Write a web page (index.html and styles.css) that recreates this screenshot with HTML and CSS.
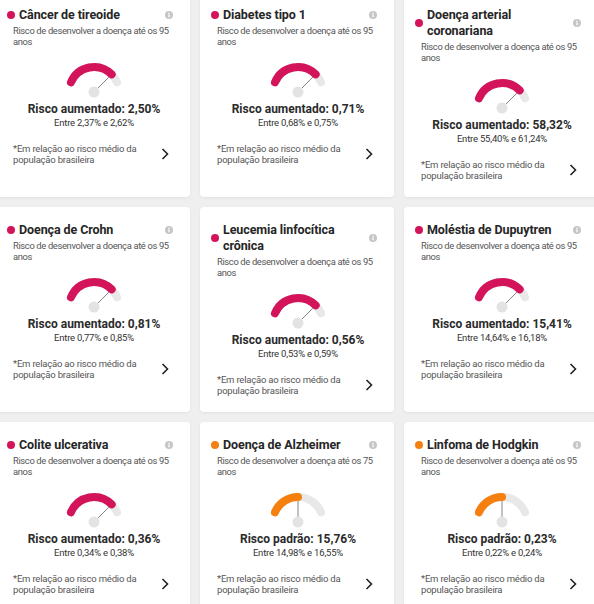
FILE: index.html
```html
<!DOCTYPE html>
<html>
<head>
    <meta charset="utf-8">
    <title>Riscos genéticos</title>

    <!-- START CSS STYLE -->
    <link rel="stylesheet" href="styles.css">
    <!-- End CSS STYLE -->

</head>

<body>
    <div class="risk-grid">

        <!-- Linha 1 -->
        <div class="risk-card">
            <div class="risk-head">
                <span class="dot dot-high"></span>
                <h2 class="risk-title">Câncer de tireoide</h2>
                <svg class="info" viewBox="0 0 10 10"><circle cx="5" cy="5" r="5"/><rect x="4.2" y="4.2" width="1.6" height="3.6"/><circle cx="5" cy="2.7" r="0.9"/></svg>
            </div>
            <p class="risk-sub">Risco de desenvolver a doença até os 95 anos</p>
            <svg class="gauge gauge-high" viewBox="0 0 62 38">
                <path class="track" d="M7.99 21.23A25 25 0 0 1 54.01 21.23"/>
                <path class="fill" d="M7.99 21.23A25 25 0 0 1 48.68 13.32"/>
                <line class="needle" x1="31" y1="31" x2="45.85" y2="16.15"/>
                <circle class="pivot" cx="31" cy="31" r="5.5"/>
            </svg>
            <p class="risk-value">Risco aumentado: 2,50%</p>
            <p class="risk-range">Entre 2,37% e 2,62%</p>
            <div class="risk-foot">
                <p class="risk-note">*Em relação ao risco médio da população brasileira</p>
                <svg class="chevron" viewBox="0 0 8 12"><path d="M1.5 1l5 5-5 5"/></svg>
            </div>
        </div>

        <div class="risk-card">
            <div class="risk-head">
                <span class="dot dot-high"></span>
                <h2 class="risk-title">Diabetes tipo 1</h2>
                <svg class="info" viewBox="0 0 10 10"><circle cx="5" cy="5" r="5"/><rect x="4.2" y="4.2" width="1.6" height="3.6"/><circle cx="5" cy="2.7" r="0.9"/></svg>
            </div>
            <p class="risk-sub">Risco de desenvolver a doença até os 95 anos</p>
            <svg class="gauge gauge-high" viewBox="0 0 62 38">
                <path class="track" d="M7.99 21.23A25 25 0 0 1 54.01 21.23"/>
                <path class="fill" d="M7.99 21.23A25 25 0 0 1 48.68 13.32"/>
                <line class="needle" x1="31" y1="31" x2="45.85" y2="16.15"/>
                <circle class="pivot" cx="31" cy="31" r="5.5"/>
            </svg>
            <p class="risk-value">Risco aumentado: 0,71%</p>
            <p class="risk-range">Entre 0,68% e 0,75%</p>
            <div class="risk-foot">
                <p class="risk-note">*Em relação ao risco médio da população brasileira</p>
                <svg class="chevron" viewBox="0 0 8 12"><path d="M1.5 1l5 5-5 5"/></svg>
            </div>
        </div>

        <div class="risk-card">
            <div class="risk-head">
                <span class="dot dot-high"></span>
                <h2 class="risk-title">Doença arterial coronariana</h2>
                <svg class="info" viewBox="0 0 10 10"><circle cx="5" cy="5" r="5"/><rect x="4.2" y="4.2" width="1.6" height="3.6"/><circle cx="5" cy="2.7" r="0.9"/></svg>
            </div>
            <p class="risk-sub">Risco de desenvolver a doença até os 95 anos</p>
            <svg class="gauge gauge-high" viewBox="0 0 62 38">
                <path class="track" d="M7.99 21.23A25 25 0 0 1 54.01 21.23"/>
                <path class="fill" d="M7.99 21.23A25 25 0 0 1 48.68 13.32"/>
                <line class="needle" x1="31" y1="31" x2="45.85" y2="16.15"/>
                <circle class="pivot" cx="31" cy="31" r="5.5"/>
            </svg>
            <p class="risk-value">Risco aumentado: 58,32%</p>
            <p class="risk-range">Entre 55,40% e 61,24%</p>
            <div class="risk-foot">
                <p class="risk-note">*Em relação ao risco médio da população brasileira</p>
                <svg class="chevron" viewBox="0 0 8 12"><path d="M1.5 1l5 5-5 5"/></svg>
            </div>
        </div>

        <!-- Linha 2 -->
        <div class="risk-card">
            <div class="risk-head">
                <span class="dot dot-high"></span>
                <h2 class="risk-title">Doença de Crohn</h2>
                <svg class="info" viewBox="0 0 10 10"><circle cx="5" cy="5" r="5"/><rect x="4.2" y="4.2" width="1.6" height="3.6"/><circle cx="5" cy="2.7" r="0.9"/></svg>
            </div>
            <p class="risk-sub">Risco de desenvolver a doença até os 95 anos</p>
            <svg class="gauge gauge-high" viewBox="0 0 62 38">
                <path class="track" d="M7.99 21.23A25 25 0 0 1 54.01 21.23"/>
                <path class="fill" d="M7.99 21.23A25 25 0 0 1 48.68 13.32"/>
                <line class="needle" x1="31" y1="31" x2="45.85" y2="16.15"/>
                <circle class="pivot" cx="31" cy="31" r="5.5"/>
            </svg>
            <p class="risk-value">Risco aumentado: 0,81%</p>
            <p class="risk-range">Entre 0,77% e 0,85%</p>
            <div class="risk-foot">
                <p class="risk-note">*Em relação ao risco médio da população brasileira</p>
                <svg class="chevron" viewBox="0 0 8 12"><path d="M1.5 1l5 5-5 5"/></svg>
            </div>
        </div>

        <div class="risk-card">
            <div class="risk-head">
                <span class="dot dot-high"></span>
                <h2 class="risk-title">Leucemia linfocítica crônica</h2>
                <svg class="info" viewBox="0 0 10 10"><circle cx="5" cy="5" r="5"/><rect x="4.2" y="4.2" width="1.6" height="3.6"/><circle cx="5" cy="2.7" r="0.9"/></svg>
            </div>
            <p class="risk-sub">Risco de desenvolver a doença até os 95 anos</p>
            <svg class="gauge gauge-high" viewBox="0 0 62 38">
                <path class="track" d="M7.99 21.23A25 25 0 0 1 54.01 21.23"/>
                <path class="fill" d="M7.99 21.23A25 25 0 0 1 48.68 13.32"/>
                <line class="needle" x1="31" y1="31" x2="45.85" y2="16.15"/>
                <circle class="pivot" cx="31" cy="31" r="5.5"/>
            </svg>
            <p class="risk-value">Risco aumentado: 0,56%</p>
            <p class="risk-range">Entre 0,53% e 0,59%</p>
            <div class="risk-foot">
                <p class="risk-note">*Em relação ao risco médio da população brasileira</p>
                <svg class="chevron" viewBox="0 0 8 12"><path d="M1.5 1l5 5-5 5"/></svg>
            </div>
        </div>

        <div class="risk-card">
            <div class="risk-head">
                <span class="dot dot-high"></span>
                <h2 class="risk-title">Moléstia de Dupuytren</h2>
                <svg class="info" viewBox="0 0 10 10"><circle cx="5" cy="5" r="5"/><rect x="4.2" y="4.2" width="1.6" height="3.6"/><circle cx="5" cy="2.7" r="0.9"/></svg>
            </div>
            <p class="risk-sub">Risco de desenvolver a doença até os 95 anos</p>
            <svg class="gauge gauge-high" viewBox="0 0 62 38">
                <path class="track" d="M7.99 21.23A25 25 0 0 1 54.01 21.23"/>
                <path class="fill" d="M7.99 21.23A25 25 0 0 1 48.68 13.32"/>
                <line class="needle" x1="31" y1="31" x2="45.85" y2="16.15"/>
                <circle class="pivot" cx="31" cy="31" r="5.5"/>
            </svg>
            <p class="risk-value">Risco aumentado: 15,41%</p>
            <p class="risk-range">Entre 14,64% e 16,18%</p>
            <div class="risk-foot">
                <p class="risk-note">*Em relação ao risco médio da população brasileira</p>
                <svg class="chevron" viewBox="0 0 8 12"><path d="M1.5 1l5 5-5 5"/></svg>
            </div>
        </div>

        <!-- Linha 3 -->
        <div class="risk-card">
            <div class="risk-head">
                <span class="dot dot-high"></span>
                <h2 class="risk-title">Colite ulcerativa</h2>
                <svg class="info" viewBox="0 0 10 10"><circle cx="5" cy="5" r="5"/><rect x="4.2" y="4.2" width="1.6" height="3.6"/><circle cx="5" cy="2.7" r="0.9"/></svg>
            </div>
            <p class="risk-sub">Risco de desenvolver a doença até os 95 anos</p>
            <svg class="gauge gauge-high" viewBox="0 0 62 38">
                <path class="track" d="M7.99 21.23A25 25 0 0 1 54.01 21.23"/>
                <path class="fill" d="M7.99 21.23A25 25 0 0 1 48.68 13.32"/>
                <line class="needle" x1="31" y1="31" x2="45.85" y2="16.15"/>
                <circle class="pivot" cx="31" cy="31" r="5.5"/>
            </svg>
            <p class="risk-value">Risco aumentado: 0,36%</p>
            <p class="risk-range">Entre 0,34% e 0,38%</p>
            <div class="risk-foot">
                <p class="risk-note">*Em relação ao risco médio da população brasileira</p>
                <svg class="chevron" viewBox="0 0 8 12"><path d="M1.5 1l5 5-5 5"/></svg>
            </div>
        </div>

        <div class="risk-card">
            <div class="risk-head">
                <span class="dot dot-normal"></span>
                <h2 class="risk-title">Doença de Alzheimer</h2>
                <svg class="info" viewBox="0 0 10 10"><circle cx="5" cy="5" r="5"/><rect x="4.2" y="4.2" width="1.6" height="3.6"/><circle cx="5" cy="2.7" r="0.9"/></svg>
            </div>
            <p class="risk-sub">Risco de desenvolver a doença até os 75 anos</p>
            <svg class="gauge gauge-normal" viewBox="0 0 62 38">
                <path class="track" d="M7.99 21.23A25 25 0 0 1 54.01 21.23"/>
                <path class="fill" d="M7.99 21.23A25 25 0 0 1 31 6"/>
                <line class="needle" x1="31" y1="31" x2="31" y2="10"/>
                <circle class="pivot" cx="31" cy="31" r="5.5"/>
            </svg>
            <p class="risk-value">Risco padrão: 15,76%</p>
            <p class="risk-range">Entre 14,98% e 16,55%</p>
            <div class="risk-foot">
                <p class="risk-note">*Em relação ao risco médio da população brasileira</p>
                <svg class="chevron" viewBox="0 0 8 12"><path d="M1.5 1l5 5-5 5"/></svg>
            </div>
        </div>

        <div class="risk-card">
            <div class="risk-head">
                <span class="dot dot-normal"></span>
                <h2 class="risk-title">Linfoma de Hodgkin</h2>
                <svg class="info" viewBox="0 0 10 10"><circle cx="5" cy="5" r="5"/><rect x="4.2" y="4.2" width="1.6" height="3.6"/><circle cx="5" cy="2.7" r="0.9"/></svg>
            </div>
            <p class="risk-sub">Risco de desenvolver a doença até os 95 anos</p>
            <svg class="gauge gauge-normal" viewBox="0 0 62 38">
                <path class="track" d="M7.99 21.23A25 25 0 0 1 54.01 21.23"/>
                <path class="fill" d="M7.99 21.23A25 25 0 0 1 31 6"/>
                <line class="needle" x1="31" y1="31" x2="31" y2="10"/>
                <circle class="pivot" cx="31" cy="31" r="5.5"/>
            </svg>
            <p class="risk-value">Risco padrão: 0,23%</p>
            <p class="risk-range">Entre 0,22% e 0,24%</p>
            <div class="risk-foot">
                <p class="risk-note">*Em relação ao risco médio da população brasileira</p>
                <svg class="chevron" viewBox="0 0 8 12"><path d="M1.5 1l5 5-5 5"/></svg>
            </div>
        </div>

    </div>
</body>
</html>
```

FILE: styles.css
```css
body{
    margin: 0;
    background: #efefef;
    font-family: Roboto, "Noto Sans", sans-serif;
    color: #333;
    overflow: hidden;
}

/* the list is scrolled a little, so the first row starts above the fold */
.risk-grid{
    display: grid;
    grid-template-columns: repeat(3, 194px);
    gap: 10px;
    margin: -8px 0 0 -4px;
}

.risk-card{
    background: #fff;
    border-radius: 4px;
    box-shadow: 0 1px 3px rgba(0, 0, 0, 0.06);
    padding: 15px 15px 16px 17px;
    display: flex;
    flex-direction: column;
}

.risk-head{
    display: flex;
    align-items: center;
    margin-left: -6px;
    margin-right: 2px;
}
.dot{
    flex: none;
    width: 8px;
    height: 8px;
    border-radius: 50%;
    margin-right: 4px;
}
.dot-high{
    background: #d4145a;
}
.dot-normal{
    background: #f5800f;
}
.risk-title{
    flex: 1;
    margin: 0;
    font-size: 12.5px;
    line-height: 16px;
    font-weight: bold;
    color: #262626;
    letter-spacing: -0.1px;
}
.info{
    flex: none;
    width: 8px;
    height: 8px;
    margin-left: 6px;
}
.info circle:first-child{
    fill: #c6c6c6;
}
.info rect, .info circle + rect + circle{
    fill: #fff;
}

p{
    margin: 0;
}
.risk-sub{
    margin-top: 2px;
    font-size: 9.4px;
    line-height: 11px;
    color: #555;
    letter-spacing: -0.35px;
}

.gauge{
    display: block;
    width: 62px;
    height: 38px;
    margin: 14px auto 0;
    overflow: visible;
}
.gauge path{
    fill: none;
    stroke-width: 8;
    stroke-linecap: round;
}
.gauge .track{
    stroke: #e8e8e8;
}
.gauge-high .fill{
    stroke: #d4145a;
}
.gauge-normal .fill{
    stroke: #f5800f;
}
.gauge .needle{
    stroke: #666;
    stroke-width: 0.8;
}
.gauge .pivot{
    fill: #e3e3e3;
}

.risk-value{
    margin-top: 2px;
    text-align: center;
    font-size: 12px;
    line-height: 16px;
    font-weight: bold;
    color: #2b2b2b;
}
.risk-range{
    text-align: center;
    font-size: 9.5px;
    line-height: 12px;
    color: #333;
    letter-spacing: -0.2px;
}

.risk-foot{
    margin-top: 14px;
    margin-right: 2px;
    display: flex;
    align-items: center;
    justify-content: space-between;
}
.risk-note{
    width: 125px;
    font-size: 9.5px;
    line-height: 11px;
    color: #555;
    letter-spacing: -0.2px;
}
.chevron{
    flex: none;
    width: 8px;
    height: 12px;
    margin-right: 4px;
}
.chevron path{
    fill: none;
    stroke: #222;
    stroke-width: 1.6;
}
```
